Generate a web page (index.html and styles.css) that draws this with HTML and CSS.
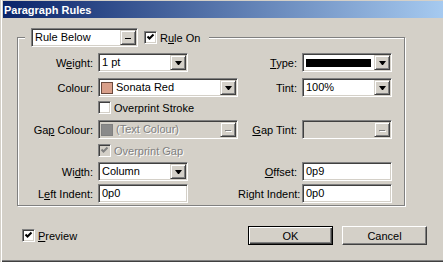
FILE: index.html
```html
<!DOCTYPE html>
<html>
<head>
<meta charset="utf-8">
<link rel="stylesheet" href="styles.css">
</head>
<body>
<div class="window">
  <div class="titlebar">Paragraph Rules</div>
  <div class="content">
    <div class="group">
      <div class="legend">
        <div class="field drop w-rule"><span class="val">Rule Below</span><span class="dbtn"><span class="dash"></span></span></div>
        <span class="check"><svg width="11" height="11" viewBox="0 0 11 11"><polyline points="2.5,4.5 4.5,6.5 8.5,2.5" fill="none" stroke="#000" stroke-width="2"/></svg></span>
        <span class="cklabel">R<u>u</u>le On</span>
      </div>

      <div class="row">
        <span class="lbl">W<u>e</u>ight:</span>
        <div class="cell"><div class="field drop w-s"><span class="val">1 pt</span><span class="dbtn"><span class="arrow"></span></span></div></div>
        <span class="lbl2"><u>T</u>ype:</span>
        <div class="field drop w-r"><span class="typebar"></span><span class="dbtn"><span class="arrow"></span></span></div>
      </div>

      <div class="row">
        <span class="lbl">Colour:</span>
        <div class="cell"><div class="field drop w-l"><span class="sw sw-red"></span><span class="val">Sonata Red</span><span class="dbtn"><span class="arrow"></span></span></div></div>
        <span class="lbl2">Tint:</span>
        <div class="field drop w-r"><span class="val">100%</span><span class="dbtn"><span class="arrow"></span></span></div>
      </div>

      <div class="row ckrow r3">
        <span class="check"></span>
        <span class="cklabel">Overprint Stroke</span>
      </div>

      <div class="row">
        <span class="lbl">Ga<u>p</u> Colour:</span>
        <div class="cell"><div class="field drop w-l off"><span class="sw sw-gray"></span><span class="val dis">(Text Colour)</span><span class="dbtn"><span class="dash dis-dash"></span></span></div></div>
        <span class="lbl2"><u>G</u>ap Tint:</span>
        <div class="field drop w-r off"><span class="val"></span><span class="dbtn"><span class="dash dis-dash"></span></span></div>
      </div>

      <div class="row ckrow r5">
        <span class="check off"><svg width="11" height="11" viewBox="0 0 11 11"><polyline points="2.5,4.5 4.5,6.5 8.5,2.5" fill="none" stroke="#808080" stroke-width="2"/></svg></span>
        <span class="cklabel dis">Overprint Gap</span>
      </div>

      <div class="row r6">
        <span class="lbl">Wi<u>d</u>th:</span>
        <div class="cell"><div class="field drop w-s"><span class="val">Column</span><span class="dbtn"><span class="arrow"></span></span></div></div>
        <span class="lbl2"><u>O</u>ffset:</span>
        <div class="field w-r"><span class="val">0p9</span></div>
      </div>

      <div class="row r7">
        <span class="lbl">L<u>e</u>ft Indent:</span>
        <div class="cell"><div class="field w-s"><span class="val">0p0</span></div></div>
        <span class="lbl2">Ri<u>g</u>ht Indent:</span>
        <div class="field w-r"><span class="val">0p0</span></div>
      </div>
    </div>

    <div class="footer">
      <span class="check"><svg width="11" height="11" viewBox="0 0 11 11"><polyline points="2.5,4.5 4.5,6.5 8.5,2.5" fill="none" stroke="#000" stroke-width="2"/></svg></span>
      <span class="cklabel"><u>P</u>review</span>
      <button class="pbtn default">OK</button>
      <button class="pbtn cancel">Cancel</button>
    </div>
  </div>
</div>
</body>
</html>
```
FILE: styles.css
```css
body {
  margin: 0;
  font-family: "Liberation Sans", Arial, sans-serif;
  font-size: 11px;
  color: #000;
}

.window {
  width: 443px;
  height: 262px;
  box-sizing: border-box;
  padding-top: 1px;
  background: #d4d0c8;
  overflow: hidden;
  box-shadow: inset 1px 0 0 #d4d0c8, inset 2px 0 0 #ffffff, inset 0 -1px 0 #404040, inset 0 -2px 0 #808080;
}

.titlebar {
  margin-left: 3px;
  height: 17px;
  box-sizing: border-box;
  padding: 1px 0 0 1px;
  line-height: 16px;
  background: linear-gradient(to right, #0a246a, #a6caf0);
  color: #fff;
  font-weight: bold;
  font-size: 11px;
}

.content {
  padding-left: 17px;
}

.group {
  margin-top: 19px;
  width: 388px;
  box-sizing: border-box;
  border: 1px solid #808080;
  box-shadow: 1px 1px 0 #ffffff, inset 1px 1px 0 #ffffff;
  padding-bottom: 2px;
}

.legend {
  display: flex;
  align-items: center;
  width: fit-content;
  height: 19px;
  margin: -10px 0 0 7px;
  padding: 0 9px 0 6px;
  background: #d4d0c8;
}

.legend .check {
  margin-left: 6px;
}

.row {
  display: flex;
  align-items: center;
  height: 19px;
  margin-top: 6px;
}

.ckrow {
  height: 13px;
  padding-left: 80px;
}

.r3 { margin-top: 4px; }
.r5 { margin-top: 5px; }
.r6 { margin-top: 5px; }
.r7 { margin-top: 3px; }

.lbl {
  width: 80px;
  box-sizing: border-box;
  padding-right: 5px;
  text-align: right;
  white-space: nowrap;
}

.lbl2 {
  width: 64px;
  box-sizing: border-box;
  padding-right: 5px;
  text-align: right;
  white-space: nowrap;
}

.cell {
  width: 140px;
  display: flex;
}

.field {
  height: 19px;
  box-sizing: border-box;
  display: flex;
  align-items: center;
  padding: 1px;
  background: #ffffff;
  border: 1px solid;
  border-color: #808080 #ffffff #ffffff #808080;
  box-shadow: inset 1px 1px 0 #404040, inset -1px -1px 0 #d4d0c8;
  white-space: nowrap;
}

.field.off {
  background: #d4d0c8;
}

.w-rule { width: 107px; }
.w-s { width: 90px; }
.w-l { width: 140px; }
.w-r { width: 90px; }

.val {
  flex: 1;
  padding-left: 2px;
  line-height: 15px;
  overflow: hidden;
}

.sw + .val {
  padding-left: 0;
}

.dis {
  color: #808080;
  text-shadow: 1px 1px 0 #ffffff;
}

.dbtn {
  width: 16px;
  height: 15px;
  box-sizing: border-box;
  display: flex;
  align-items: center;
  justify-content: center;
  background: #d4d0c8;
  border: 1px solid;
  border-color: #d4d0c8 #404040 #404040 #d4d0c8;
  box-shadow: inset 1px 1px 0 #ffffff, inset -1px -1px 0 #808080;
}

.arrow {
  width: 1px;
  height: 0;
  border-left: 3px solid transparent;
  border-right: 3px solid transparent;
  border-top: 4px solid #000;
  margin-top: 1px;
}

.dash {
  width: 6px;
  height: 1px;
  background: #000;
  margin-top: 1px;
}

.dis-dash {
  background: #808080;
  box-shadow: 1px 1px 0 #ffffff;
}

.typebar {
  flex: 1;
  height: 8px;
  margin: 0 3px 0 2px;
  background: #000;
}

.sw {
  width: 12px;
  height: 12px;
  box-sizing: border-box;
  margin: 0 3px 0 1px;
  border: 1px solid #6b4a3e;
}

.sw-red { background: #d9a08b; }
.sw-gray { background: #8a8a8a; border-color: #808080; }

.check {
  width: 13px;
  height: 13px;
  box-sizing: border-box;
  flex: none;
  background: #ffffff;
  border: 1px solid;
  border-color: #808080 #ffffff #ffffff #808080;
  box-shadow: inset 1px 1px 0 #404040, inset -1px -1px 0 #d4d0c8;
}

.check svg {
  display: block;
}

.check.off {
  background: #d4d0c8;
}

.cklabel {
  margin-left: 3px;
  white-space: nowrap;
}

.footer {
  display: flex;
  align-items: center;
  height: 19px;
  margin-top: 20px;
  padding: 0 16px 0 5px;
}

.pbtn {
  width: 85px;
  height: 19px;
  box-sizing: border-box;
  padding: 0;
  font-family: "Liberation Sans", Arial, sans-serif;
  font-size: 11px;
  color: #000;
  background: #d4d0c8;
}

.default {
  margin-left: auto;
  border: 1px solid #000;
  box-shadow: inset 1px 1px 0 #ffffff, inset -1px -1px 0 #404040, inset -2px -2px 0 #808080;
}

.cancel {
  margin-left: 9px;
  border: 1px solid;
  border-color: #ffffff #404040 #404040 #ffffff;
  box-shadow: inset -1px -1px 0 #808080;
}
```
